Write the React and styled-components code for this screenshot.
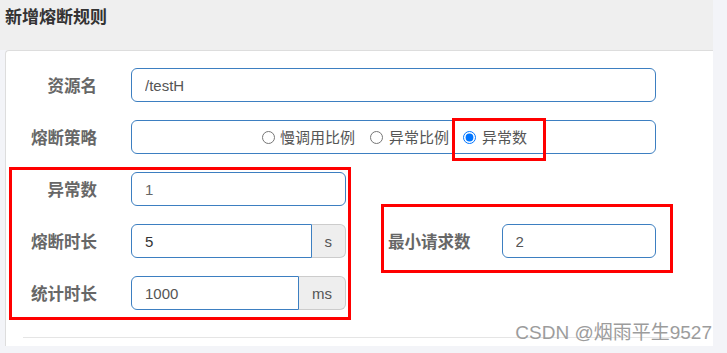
import React from 'react';
import styled, { createGlobalStyle } from 'styled-components';

const Global = createGlobalStyle`
  html, body { margin: 0; padding: 0; background: #f3f4f8; }
  body { font-family: "Liberation Sans", "Noto Sans CJK SC", sans-serif; }
  * { box-sizing: border-box; }
`;

const Page = styled.div`
  position: relative;
  width: 727px;
  height: 353px;
  overflow: hidden;
  background: #f3f4f8;
`;

const Modal = styled.div`
  width: 713px;
`;

const Header = styled.div`
  height: 50px;
  background: #efefef;
  padding: 4px 0 0 5px;
`;

const Title = styled.h4`
  margin: 0;
  font: bold 17px/24px "Noto Sans CJK SC", sans-serif;
  color: #333;
`;

const Card = styled.div`
  margin-left: 5px;
  height: 296px;
  background: #fff;
  border-top: 1px solid #ddd;
  border-left: 1px solid #ddd;
  border-top-left-radius: 4px;
  padding-top: 17px;
`;

const Row = styled.div`
  display: grid;
  grid-template-columns: 91px ${(p) => p.$inputWidth}px;
  column-gap: 34px;
  align-items: center;
  height: 34px;
  margin-bottom: ${(p) => (p.$last ? 0 : 18)}px;
`;

const Label = styled.label`
  text-align: right;
  white-space: nowrap;
  font: bold 16.5px/20px "Noto Sans CJK SC", sans-serif;
  color: #676767;
`;

const Input = styled.input`
  width: 100%;
  height: 34px;
  border: 1px solid #3d7fc1;
  border-radius: ${(p) => (p.$grouped ? '6px 0 0 6px' : '6px')};
  padding: 0 13px;
  font: 15px "Liberation Sans", sans-serif;
  color: ${(p) => p.$color || '#555'};
  background: #fff;
  outline: none;
  min-width: 0;
`;

const Group = styled.div`
  display: flex;
  height: 34px;
`;

const Addon = styled.span`
  display: flex;
  align-items: center;
  justify-content: center;
  padding: 0 13px;
  border: 1px solid #ccc;
  border-left: none;
  border-radius: 0 6px 6px 0;
  background: #eee;
  color: #555;
  font: 15px "Liberation Sans", sans-serif;
`;

const RadioBox = styled.div`
  height: 34px;
  border: 1px solid #3d7fc1;
  border-radius: 6px;
  display: flex;
  align-items: center;
  justify-content: center;
  padding-left: 2px;
`;

const Option = styled.label`
  position: relative;
  display: inline-flex;
  align-items: center;
  gap: ${(p) => p.$gap}px;
  margin-right: ${(p) => p.$mr}px;
  font: 15px/20px "Noto Sans CJK SC", sans-serif;
  color: #555;
  white-space: nowrap;
`;

const Radio = styled.input`
  margin: 0;
  width: 13px;
  height: 13px;
`;

const Split = styled.div`
  display: flex;
  align-items: center;
`;

const LeftCol = styled.div`
  position: relative;
  width: 340px;
`;

const RightCol = styled.div`
  position: relative;
  margin-left: 42px;
  display: flex;
  align-items: center;
  gap: 31px;
`;

const RightInput = styled.div`
  width: 154px;
`;

const RedBox = styled.span`
  position: absolute;
  top: ${(p) => p.$t}px;
  right: ${(p) => p.$r}px;
  bottom: ${(p) => p.$b}px;
  left: ${(p) => p.$l}px;
  border: 3px solid #f00;
  pointer-events: none;
`;

const Divider = styled.div`
  margin: 27px 17px 0 17px;
  border-top: 1px solid #e5e5e5;
`;

const Watermark = styled.div`
  position: absolute;
  right: 15px;
  top: 321px;
  font: 19px/24px "Liberation Sans", "Noto Sans CJK SC", sans-serif;
  color: #9c9c9c;
  white-space: nowrap;
  pointer-events: none;
`;

export default function App() {
  return (
    <Page>
      <Global />
      <Modal>
        <Header>
          <Title>新增熔断规则</Title>
        </Header>
        <Card>
          <Row $inputWidth={525}>
            <Label>资源名</Label>
            <Input defaultValue="/testH" />
          </Row>
          <Row $inputWidth={525}>
            <Label>熔断策略</Label>
            <RadioBox>
              <Option $gap={5} $mr={15}>
                <Radio type="radio" name="grade" />
                慢调用比例
              </Option>
              <Option $gap={6} $mr={14}>
                <Radio type="radio" name="grade" />
                异常比例
              </Option>
              <Option $gap={6} $mr={0}>
                <Radio type="radio" name="grade" defaultChecked />
                异常数
                <RedBox $t={-9} $r={-19} $b={-14} $l={-11} />
              </Option>
            </RadioBox>
          </Row>
          <Split>
            <LeftCol>
              <Row $inputWidth={215}>
                <Label>异常数</Label>
                <Input defaultValue="1" $color="#666" />
              </Row>
              <Row $inputWidth={215}>
                <Label>熔断时长</Label>
                <Group>
                  <Input defaultValue="5" $grouped $color="#333" />
                  <Addon>s</Addon>
                </Group>
              </Row>
              <Row $inputWidth={215} $last>
                <Label>统计时长</Label>
                <Group>
                  <Input defaultValue="1000" $grouped />
                  <Addon>ms</Addon>
                </Group>
              </Row>
              <RedBox $t={-5} $r={-5} $b={-10} $l={3} />
            </LeftCol>
            <RightCol>
              <Label>最小请求数</Label>
              <RightInput>
                <Input defaultValue="2" />
              </RightInput>
              <RedBox $t={-20} $r={-17} $b={-15} $l={-7} />
            </RightCol>
          </Split>
          <Divider />
        </Card>
      </Modal>
      <Watermark>CSDN @烟雨平生9527</Watermark>
    </Page>
  );
}
